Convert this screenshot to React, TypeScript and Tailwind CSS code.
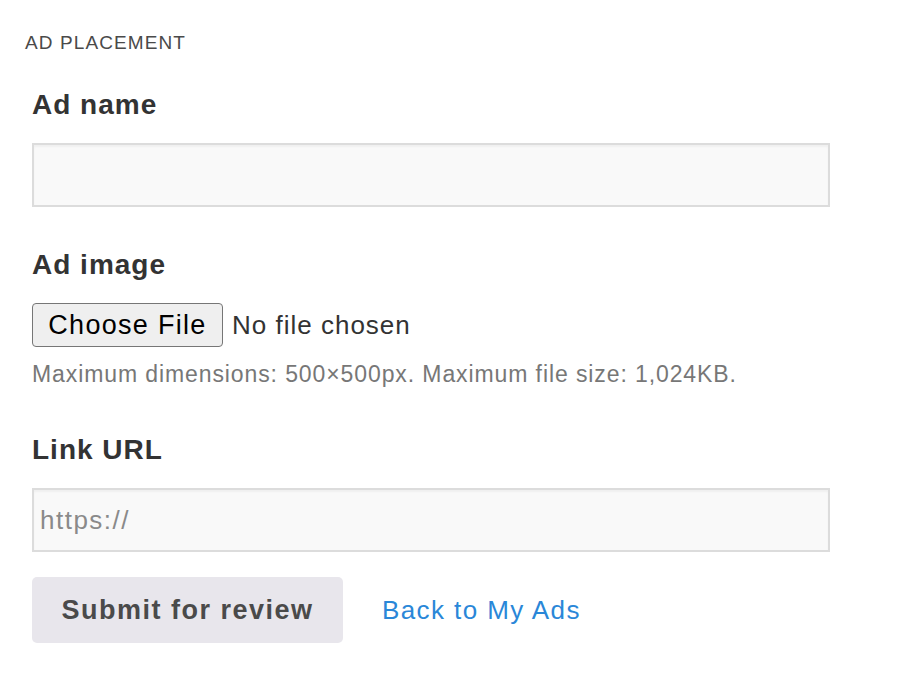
import React from "react";

export default function App() {
  return (
    <div
      className="min-h-[674px] w-[898px] bg-white pt-[31px]"
      style={{ fontFamily: '"Liberation Sans", Arial, sans-serif' }}
    >
      <div className="pl-[25px] text-[19px] leading-[24px] text-[#4a4a4a] tracking-[1.1px]">
        AD PLACEMENT
      </div>
      <form className="pl-[32px]" onSubmit={(e) => e.preventDefault()}>
        <label className="mt-[34px] block text-[28px] font-bold leading-[32px] tracking-[1px] text-[#333]">
          Ad name
        </label>
        <input
          type="text"
          className="mt-[22px] block h-[64px] w-[798px] border-2 border-[#dcdcdc] bg-[#f9f9f9] px-[8px] text-[26px] shadow-[inset_0_2px_2px_rgba(0,0,0,0.04)] outline-none"
        />

        <label className="mt-[42px] block text-[28px] font-bold leading-[32px] tracking-[1px] text-[#333]">
          Ad image
        </label>
        <div className="mt-[22px] flex items-center">
          <span className="flex h-[44px] w-[191px] items-center justify-center rounded-[4px] border border-[#767676] bg-[#efefef] text-[27px] tracking-[1.3px] text-black">
            Choose File
          </span>
          <span className="ml-[9px] text-[26px] tracking-[1px] text-[#333]">No file chosen</span>
        </div>
        <p className="mt-[13px] text-[23px] leading-[28px] tracking-[0.9px] text-[#777]">
          Maximum dimensions: 500×500px. Maximum file size: 1,024KB.
        </p>

        <label className="mt-[46px] block text-[28px] font-bold leading-[32px] tracking-[1px] text-[#333]">
          Link URL
        </label>
        <input
          type="text"
          placeholder="https://"
          className="mt-[22px] block h-[64px] w-[798px] border-2 border-[#dcdcdc] bg-[#f9f9f9] px-[6px] text-[26px] tracking-[1.5px] text-[#333] shadow-[inset_0_2px_2px_rgba(0,0,0,0.04)] outline-none placeholder:text-[#8a8a8a]"
        />

        <div className="mt-[25px] flex items-center">
          <button
            type="submit"
            className="h-[66px] w-[311px] rounded-[5px] bg-[#e8e6ec] text-[27px] font-bold tracking-[1.5px] text-[#4a4a4a]"
          >
            Submit for review
          </button>
          <a href="#" className="ml-[39px] text-[26px] tracking-[1.4px] text-[#2a87d8]">
            Back to My Ads
          </a>
        </div>
      </form>
    </div>
  );
}
